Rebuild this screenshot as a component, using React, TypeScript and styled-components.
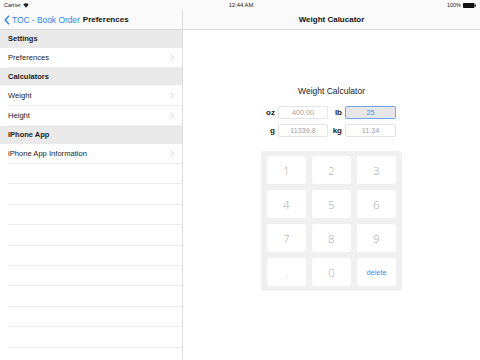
import React from "react";
import styled, { createGlobalStyle } from "styled-components";

const Global = createGlobalStyle`
  html, body { margin: 0; padding: 0; background: #fff; }
  body { font-family: "Liberation Sans", Arial, sans-serif; -webkit-font-smoothing: antialiased; }
  #root { width: 480px; height: 360px; overflow: hidden; }
`;

const Screen = styled.div`
  width: 480px;
  height: 360px;
  display: flex;
  flex-direction: column;
  background: #fff;
`;

const StatusBar = styled.div`
  height: 10px;
  display: grid;
  grid-template-columns: 1fr auto 1fr;
  align-items: center;
  padding: 0 4px;
  font-size: 5.5px;
  color: #222;
  background: #fafafa;
`;

const StatusLeft = styled.div`
  display: flex;
  align-items: center;
  gap: 2px;
`;

const StatusCenter = styled.div`
  font-size: 5.8px;
  padding-left: 2px;
`;

const StatusRight = styled.div`
  display: flex;
  justify-content: flex-end;
  align-items: center;
  gap: 2px;
`;

const Body = styled.div`
  flex: 1;
  display: flex;
  min-height: 0;
`;

const Sidebar = styled.div`
  width: 182px;
  border-right: 1px solid #dcdcdc;
  display: flex;
  flex-direction: column;
  overflow: hidden;
`;

const NavBar = styled.div<{ $center?: boolean }>`
  height: 20px;
  flex: none;
  display: flex;
  align-items: center;
  justify-content: ${(p) => (p.$center ? "center" : "flex-start")};
  padding: ${(p) => (p.$center ? "0" : "0 0 0 4px")};
  background: #fafafa;
  border-bottom: 1px solid #dadada;
  box-sizing: border-box;
`;

const BackLink = styled.span`
  display: flex;
  align-items: center;
  gap: 2px;
  color: #2f86f0;
  font-size: 8.4px;
  margin-right: 3px;
`;

const NavTitle = styled.span`
  font-size: 8px;
  font-weight: 700;
  color: #111;
`;

const SectionHeader = styled.div`
  height: 17.5px;
  flex: none;
  display: flex;
  align-items: center;
  padding-left: 8px;
  background: #e9e9ea;
  font-size: 7.5px;
  font-weight: 700;
  color: #1a1a1a;
`;

const Row = styled.div`
  height: 20.4px;
  flex: none;
  display: flex;
  align-items: center;
  justify-content: space-between;
  margin-left: 8px;
  padding-right: 8px;
  border-bottom: 1px solid #ececec;
  box-sizing: border-box;
  font-size: 7.6px;
  color: #222;
`;

const Detail = styled.div`
  flex: 1;
  display: flex;
  flex-direction: column;
`;

const DetailTitle = styled.span`
  font-size: 8px;
  font-weight: 700;
  color: #111;
`;

const Content = styled.div`
  display: flex;
  flex-direction: column;
  align-items: center;
  padding-top: 55px;
`;

const Heading = styled.div`
  font-size: 8.5px;
  color: #222;
  line-height: 12px;
  margin-bottom: 9px;
`;

const Fields = styled.div`
  display: grid;
  grid-template-columns: 13px 50px 17px 51px;
  grid-auto-rows: 13px;
  row-gap: 5px;
  align-items: center;
  margin-left: -2px;
`;

const Label = styled.span`
  font-size: 8px;
  font-weight: 700;
  color: #222;
  text-align: right;
  padding-right: 3px;
`;

const Field = styled.div<{ $active?: boolean }>`
  height: 13px;
  box-sizing: border-box;
  border: 1px solid ${(p) => (p.$active ? "#6fa8ea" : "#e4e4e4")};
  background: ${(p) => (p.$active ? "#e6e6e8" : "#fff")};
  color: ${(p) => (p.$active ? "#3b8cef" : "#a0a0a0")};
  border-radius: 2px;
  font-size: 7.2px;
  display: flex;
  align-items: center;
  justify-content: center;
`;

const Keypad = styled.div`
  margin-top: 14px;
  width: 141px;
  box-sizing: border-box;
  padding: 5px 6px;
  background: #f0f0f0;
  border-radius: 3px;
  display: grid;
  grid-template-columns: repeat(3, 39px);
  grid-auto-rows: 28px;
  gap: 6px;
`;

const Key = styled.div<{ $action?: boolean }>`
  background: #fff;
  border-radius: 3px;
  display: flex;
  align-items: center;
  justify-content: center;
  color: ${(p) => (p.$action ? "#3b8cef" : "#a9a9a9")};
  font-size: ${(p) => (p.$action ? "7.4px" : "11px")};
  font-family: ${(p) => (p.$action ? '"Liberation Sans", Arial, sans-serif' : '"Open Sans", "Liberation Sans", sans-serif')};
  font-weight: 300;
`;

const Chevron = () => (
  <svg width="4" height="7" viewBox="0 0 4 7">
    <polyline points="0.6,0.6 3.2,3.5 0.6,6.4" fill="none" stroke="#c4c4c8" strokeWidth="0.8" />
  </svg>
);

const BackChevron = () => (
  <svg width="6" height="10" viewBox="0 0 6 10">
    <polyline points="5,0.8 1.2,5 5,9.2" fill="none" stroke="#2f86f0" strokeWidth="1.4" />
  </svg>
);

const Wifi = () => (
  <svg width="6" height="5" viewBox="0 0 12 10">
    <path d="M6 9.5 L0.5 3.2 A8 8 0 0 1 11.5 3.2 Z" fill="#222" />
  </svg>
);

const Battery = () => (
  <svg width="13" height="5" viewBox="0 0 13 5">
    <rect x="0" y="0" width="11.5" height="5" rx="0.8" fill="#111" />
    <rect x="11.8" y="1.5" width="1.2" height="2" fill="#111" />
  </svg>
);

type Item = { kind: "header" | "row"; text: string; arrow?: boolean };

const items: Item[] = [
  { kind: "header", text: "Settings" },
  { kind: "row", text: "Preferences", arrow: true },
  { kind: "header", text: "Calculators" },
  { kind: "row", text: "Weight", arrow: true },
  { kind: "row", text: "Height", arrow: true },
  { kind: "header", text: "iPhone App" },
  { kind: "row", text: "iPhone App Information", arrow: true },
  ...Array.from({ length: 10 }, () => ({ kind: "row" as const, text: "" })),
];

const keys = ["1", "2", "3", "4", "5", "6", "7", "8", "9", ".", "0", "delete"];

export default function App() {
  return (
    <Screen>
      <Global />
      <StatusBar>
        <StatusLeft>
          Carrier <Wifi />
        </StatusLeft>
        <StatusCenter>12:44 AM</StatusCenter>
        <StatusRight>
          100% <Battery />
        </StatusRight>
      </StatusBar>
      <Body>
        <Sidebar>
          <NavBar>
            <BackLink>
              <BackChevron />
              TOC - Book Order
            </BackLink>
            <NavTitle>Preferences</NavTitle>
          </NavBar>
          {items.map((it, i) =>
            it.kind === "header" ? (
              <SectionHeader key={i}>{it.text}</SectionHeader>
            ) : (
              <Row key={i}>
                <span>{it.text}</span>
                {it.arrow && <Chevron />}
              </Row>
            )
          )}
        </Sidebar>
        <Detail>
          <NavBar $center>
            <DetailTitle>Weight Calucator</DetailTitle>
          </NavBar>
          <Content>
            <Heading>Weight Calculator</Heading>
            <Fields>
              <Label>oz</Label>
              <Field>400.00</Field>
              <Label>lb</Label>
              <Field $active>25</Field>
              <Label>g</Label>
              <Field>11339.8</Field>
              <Label>kg</Label>
              <Field>11.34</Field>
            </Fields>
            <Keypad>
              {keys.map((k) => (
                <Key key={k} $action={k === "delete"}>
                  {k}
                </Key>
              ))}
            </Keypad>
          </Content>
        </Detail>
      </Body>
    </Screen>
  );
}
